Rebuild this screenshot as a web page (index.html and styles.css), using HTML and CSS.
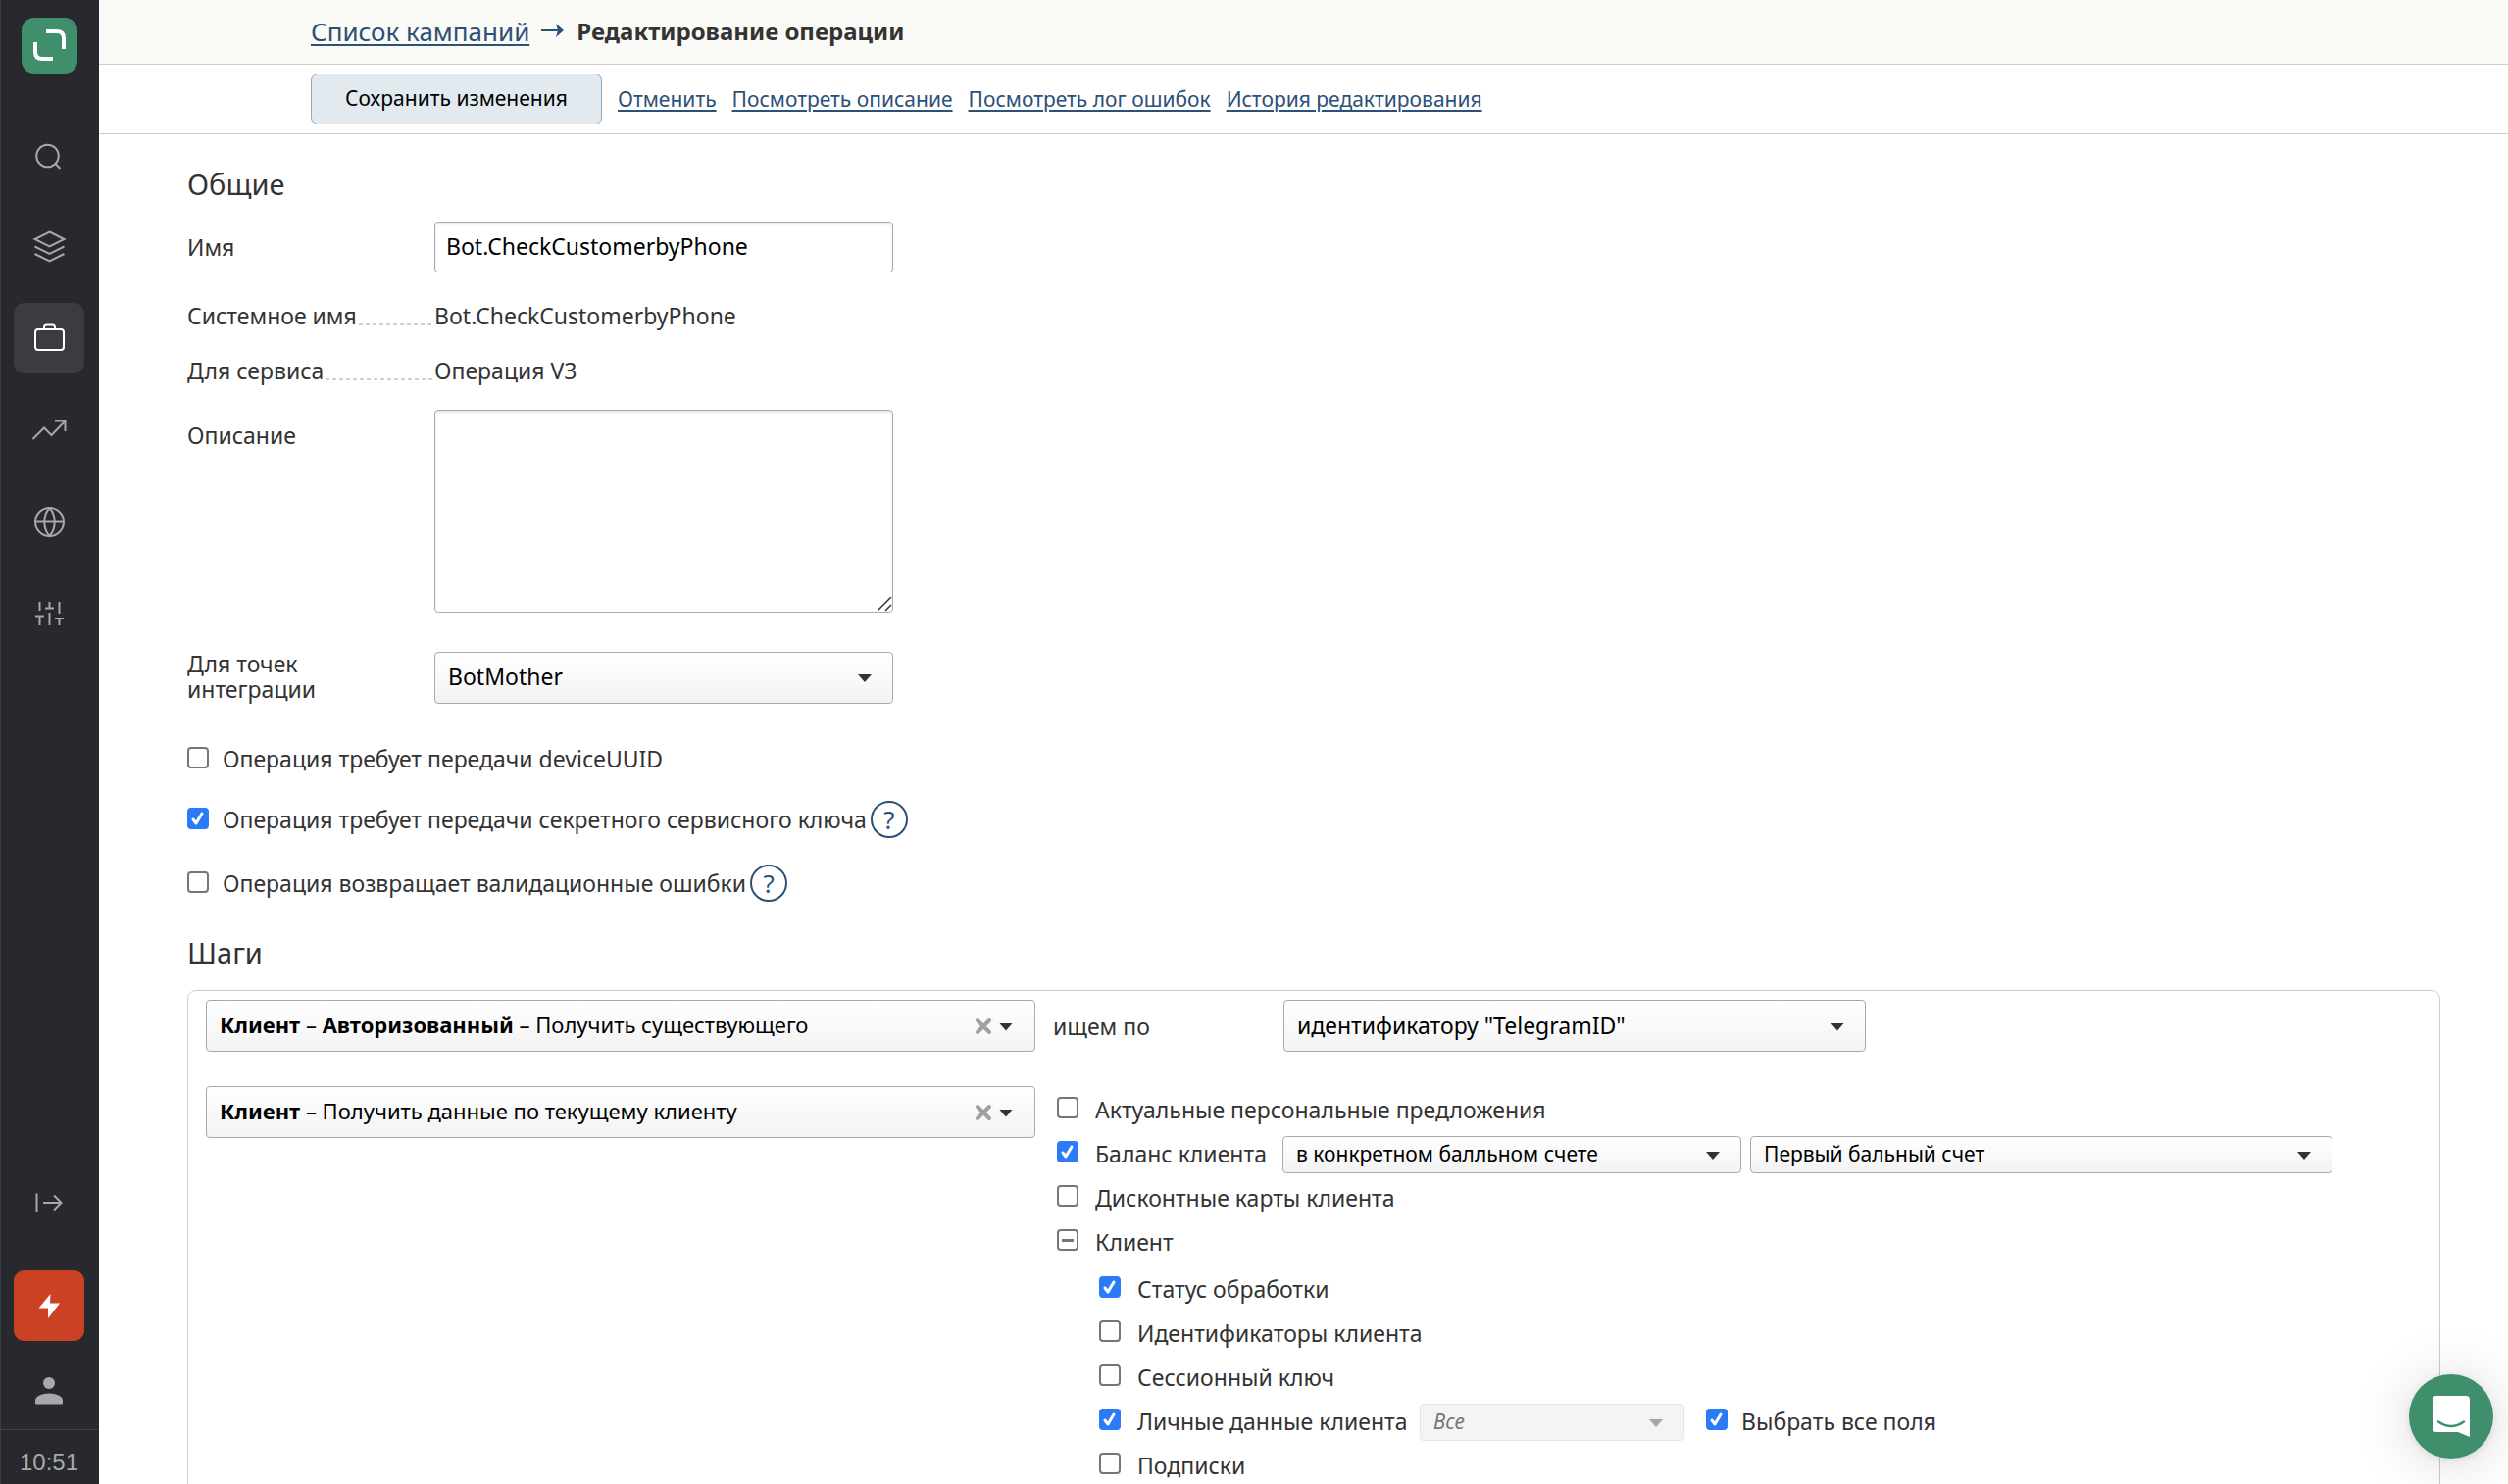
FILE: index.html
```html
<!DOCTYPE html>
<html lang="ru">
<head>
<meta charset="utf-8">
<meta name="viewport" content="width=device-width, initial-scale=1">
<title>Редактирование операции</title>
<link rel="stylesheet" href="styles.css">
</head>
<body>
<div class="app">
  <nav class="sidebar" aria-label="Основное меню">
    <a class="logo" href="#" aria-label="Главная">
      <svg viewBox="0 0 57 57" width="57" height="57" fill="none" stroke="#fff" stroke-width="4"><path d="M25 14h11q7 0 7 7v11M14 25v10q0 7 7 7h11"/></svg>
    </a>
    <a class="nav-item" href="#" aria-label="Поиск">
      <svg class="icon" viewBox="0 0 36 36"><circle cx="16.500" cy="17" r="11.300"/><path d="M24.500 25l5 5"/></svg>
    </a>
    <a class="nav-item" href="#" aria-label="Слои">
      <svg class="icon" viewBox="0 0 36 36"><path d="M18.500 2.500l15 7.500-15 7.500-15-7.500zM3.500 17.500l15 7.500 15-7.500M3.500 25l15 7.500 15-7.500"/></svg>
    </a>
    <a class="nav-item nav-item-active" href="#" aria-label="Кампании">
      <svg class="icon" viewBox="0 0 36 36"><rect x="4" y="9" width="29" height="21" rx="3"/><path d="M13 8.500V7q0-2.500 2.500-2.500h6q2.500 0 2.500 2.500v1.500"/></svg>
    </a>
    <a class="nav-item" href="#" aria-label="Отчеты">
      <svg class="icon" viewBox="0 0 36 36"><path d="M1.500 27L13 15.500l7.500 7.500L34 9M24 8.500h10.500V19"/></svg>
    </a>
    <a class="nav-item" href="#" aria-label="Сайты">
      <svg class="icon" viewBox="0 0 36 36"><circle cx="18.500" cy="17.500" r="14.500"/><path d="M4 17.500h29M18.500 3c-7 8-7 21 0 29c7-8 7-21 0-29"/></svg>
    </a>
    <a class="nav-item" href="#" aria-label="Настройки">
      <svg class="icon" viewBox="0 0 36 36"><path d="M8.500 5v9M4 19.500h9M8.500 19.500V29M18.500 5v6.500M14 11.500h9M18.500 16v13M28.500 5v12M24 22h9M28.500 22v7"/></svg>
    </a>
    <button class="nav-item nav-expand" type="button" aria-label="Развернуть меню">
      <svg class="icon" viewBox="0 0 36 36"><path d="M5.500 8.500v19M12 18h18.500M23 10.500l7.500 7.500-7.500 7.500"/></svg>
    </button>
    <a class="nav-item nav-item-alert" href="#" aria-label="Быстрые действия">
      <svg viewBox="0 0 36 36" width="36" height="36" fill="#fff"><path d="M19.500 6L7.500 20.500h9.500L17 31 29 15.500h-10z"/></svg>
    </a>
    <a class="nav-item nav-user" href="#" aria-label="Профиль">
      <svg viewBox="0 0 36 36" width="36" height="36" fill="#a7a8aa"><circle cx="18" cy="10" r="6"/><path d="M4 30v-2.500c0-4 7-7 14-7s14 3 14 7V30q0 1.500-1 1.500H5q-1 0-1-1.500z"/></svg>
    </a>
    <time class="clock">10:51</time>
  </nav>

  <main class="main">
    <header class="crumbs">
      <a href="#">Список кампаний</a>
      <svg class="crumb-arrow" viewBox="0 0 24 16" width="24" height="16" aria-hidden="true"><path d="M0 7h20" stroke="#2c5078" stroke-width="2"/><path d="M15 0l8 7-8 7 2-7z" fill="#2c5078"/></svg>
      <h1>Редактирование операции</h1>
    </header>
    <div class="toolbar">
      <button class="save" type="submit" form="operation">Сохранить изменения</button>
      <a href="#">Отменить</a>
      <a href="#">Посмотреть описание</a>
      <a href="#">Посмотреть лог ошибок</a>
      <a href="#">История редактирования</a>
    </div>

    <form class="content" id="operation">
      <h2>Общие</h2>
      <div class="field field-name">
        <label class="field-label" for="name">Имя</label>
        <input class="control" id="name" type="text" value="Bot.CheckCustomerbyPhone">
      </div>
      <dl class="facts">
        <div class="field"><dt class="field-label leader">Системное имя</dt><dd>Bot.CheckCustomerbyPhone</dd></div>
        <div class="field"><dt class="field-label leader">Для сервиса</dt><dd>Операция V3</dd></div>
      </dl>
      <div class="field field-top">
        <label class="field-label" for="description">Описание</label>
        <textarea class="control" id="description"></textarea>
      </div>
      <div class="field field-points">
        <label class="field-label" for="points">Для точек интеграции</label>
        <span class="select"><select id="points"><option>BotMother</option></select></span>
      </div>

      <div class="options">
        <div class="check"><input type="checkbox" id="uuid"><label for="uuid">Операция требует передачи deviceUUID</label></div>
        <div class="check"><input type="checkbox" id="secret" checked><label for="secret">Операция требует передачи секретного сервисного ключа</label><button class="help" type="button">?</button></div>
        <div class="check"><input type="checkbox" id="errors"><label for="errors">Операция возвращает валидационные ошибки</label><button class="help" type="button">?</button></div>
      </div>

      <h2>Шаги</h2>
      <section class="steps">
        <div class="step">
          <div class="combo">
            <button class="combo-value" type="button" aria-haspopup="listbox"><b>Клиент</b> – <b>Авторизованный</b> – Получить существующего</button>
            <button class="clear" type="button" aria-label="Очистить"><svg viewBox="0 0 18 18" width="18" height="18"><path d="M3 3l12 12M15 3L3 15" stroke="#a0a0a0" stroke-width="4" stroke-linecap="round"/></svg></button>
          </div>
          <div class="search-by">
            <label class="search-label" for="search-by">ищем по</label>
            <span class="select select-wide"><select id="search-by"><option>идентификатору "TelegramID"</option></select></span>
          </div>
        </div>
        <div class="step">
          <div class="combo">
            <button class="combo-value" type="button" aria-haspopup="listbox"><b>Клиент</b> – Получить данные по текущему клиенту</button>
            <button class="clear" type="button" aria-label="Очистить"><svg viewBox="0 0 18 18" width="18" height="18"><path d="M3 3l12 12M15 3L3 15" stroke="#a0a0a0" stroke-width="4" stroke-linecap="round"/></svg></button>
          </div>
          <ul class="tree">
            <li><div class="check"><input type="checkbox" id="offers"><label for="offers">Актуальные персональные предложения</label></div></li>
            <li><div class="check"><input type="checkbox" id="balance" checked><label class="balance-label" for="balance">Баланс клиента</label>
              <span class="select select-small"><select aria-label="Вид баланса"><option>в конкретном балльном счете</option></select></span>
              <span class="select select-small select-wide"><select aria-label="Счет"><option>Первый бальный счет</option></select></span></div></li>
            <li><div class="check"><input type="checkbox" id="cards"><label for="cards">Дисконтные карты клиента</label></div></li>
            <li><div class="check"><input type="checkbox" class="mixed" id="client" aria-checked="mixed"><label for="client">Клиент</label></div>
              <ul class="subtree">
                <li><div class="check"><input type="checkbox" id="status" checked><label for="status">Статус обработки</label></div></li>
                <li><div class="check"><input type="checkbox" id="ids"><label for="ids">Идентификаторы клиента</label></div></li>
                <li><div class="check"><input type="checkbox" id="session"><label for="session">Сессионный ключ</label></div></li>
                <li><div class="check"><input type="checkbox" id="personal" checked><label class="personal-label" for="personal">Личные данные клиента</label>
                  <span class="select select-small select-disabled"><select aria-label="Поля" disabled><option>Все</option></select></span>
                  <input type="checkbox" id="all-fields" checked><label for="all-fields">Выбрать все поля</label></div></li>
                <li><div class="check"><input type="checkbox" id="subs"><label for="subs">Подписки</label></div></li>
              </ul>
            </li>
          </ul>
        </div>
      </section>
    </form>
  </main>

  <button class="chat" type="button" aria-label="Открыть чат">
    <svg viewBox="0 0 40 44" width="40" height="44"><path d="M5 1h30q4 0 4 4v38l-12-5H5q-4 0-4-4V5q0-4 4-4z" fill="#fff"/><path d="M7 27.500q13 9 26 0" fill="none" stroke="#3f8f6c" stroke-width="2.500" stroke-linecap="round"/></svg>
  </button>
</div>
</body>
</html>
```
FILE: styles.css
```css
* { box-sizing: border-box; }

body {
  margin: 0;
  font: 23px/32px "Noto Sans", "Open Sans", sans-serif;
  color: #333;
  background: #fff;
}

button, input, select, textarea { font: inherit; color: #000; margin: 0; }
button { cursor: pointer; }
a { color: #2c5078; text-decoration-thickness: 2px; text-underline-offset: 3px; }
h1, h2, dl, dd, ul { margin: 0; padding: 0; }
ul { list-style: none; }

.app { display: flex; height: 100vh; overflow: hidden; }

/* Sidebar */
.sidebar {
  flex: none;
  width: 101px;
  display: flex;
  flex-direction: column;
  align-items: center;
  padding: 18px 1px 0 0;
  background: #28292e;
  box-shadow: inset 1px 0 #3d3e42;
}
.logo {
  display: block;
  height: 57px;
  margin-bottom: 49px;
  border-radius: 13px;
  background: #3f8f6c;
}
.nav-item {
  display: flex;
  align-items: center;
  justify-content: center;
  width: 72px;
  height: 72px;
  margin-bottom: 22px;
  padding: 0;
  border: 0;
  border-radius: 11px;
  background: none;
}
.nav-item:nth-child(2) { margin-bottom: 20px; }
.nav-item:nth-child(3) { margin-bottom: 21px; }
.icon { width: 36px; height: 36px; fill: none; stroke: #a7a8aa; stroke-width: 2; }
.nav-item-active { background: #3a3c41; }
.nav-item-active .icon { stroke: #fff; }
.nav-expand { margin-top: auto; margin-bottom: 33px; }
.nav-item-alert { background: #cb4123; margin-bottom: 15px; }
.nav-user { margin-bottom: 3px; }
.clock {
  align-self: stretch;
  height: 56px;
  padding-top: 17px;
  border-top: 1px solid #404145;
  font: 24px/32px "Liberation Sans", sans-serif;
  text-align: center;
  color: #a7a8aa;
}

/* Header */
.main { flex: 1; min-width: 0; overflow-y: auto; scrollbar-width: none; }
.crumbs {
  display: flex;
  align-items: center;
  gap: 12px;
  height: 66px;
  padding: 0 0 2px 216px;
  background: #fafaf6;
  border-bottom: 1px solid #ccc;
  font-size: 26px;
}
h1 { font-size: 24px; font-weight: 700; }
.toolbar {
  display: flex;
  align-items: center;
  gap: 16px;
  padding: 9px 0 9px 216px;
  border-bottom: 1px solid #ccc;
  font-size: 21px;
}
.save {
  width: 297px;
  height: 52px;
  padding: 0 0 3px;
  border: 1px solid #8ba8c4;
  border-radius: 7px;
  background: #e2e9ef;
}

/* Form */
.content { padding: 31px 69px 0 90px; }
h2 { font-size: 29px; font-weight: 400; line-height: 40px; margin-bottom: 18px; }
.field { display: grid; grid-template-columns: 252px minmax(0, 468px); align-items: center; }
.field-top { align-items: start; margin-bottom: 40px; }
.field-top .field-label { line-height: 52px; }
.field-points .field-label { line-height: 26px; padding: 0 90px 2px 0; }
.facts { display: grid; gap: 24px; margin: 28px 0 24px; }
.leader { display: flex; }
.leader::after {
  content: "";
  flex: 1;
  height: 26px;
  margin-left: 2px;
  background: repeating-linear-gradient(90deg, #d0d0d0 0 4px, transparent 4px 7px) bottom / 100% 2px no-repeat;
}
.control {
  display: block;
  width: 100%;
  height: 52px;
  padding: 0 11px 2px;
  border: 1px solid #aaa;
  border-radius: 4px;
  background: #fff;
  box-shadow: inset 0 2px 2px #e8e8e8;
}
textarea.control { height: 207px; margin-bottom: -1px; }
textarea::-webkit-resizer {
  background: url('data:image/svg+xml,<svg xmlns="http://www.w3.org/2000/svg" viewBox="0 0 15 15" stroke="%23333" stroke-width="1.500"><path d="M0 14L14 0M8 14l6-6"/></svg>') center / 15px no-repeat;
}

/* Drop-downs */
.select { position: relative; display: block; flex: 0 1 468px; }
.select-wide { flex-basis: 594px; }
.select select, .combo {
  width: 100%;
  height: 53px;
  border: 1px solid #aaa;
  border-radius: 4px;
  background: linear-gradient(#fff, #f3f3f3);
}
.select select { display: block; appearance: none; padding: 0 50px 2px 13px; opacity: 1; }
.select::after, .combo::after {
  content: "";
  position: absolute;
  right: 22px;
  top: calc(50% - 3px);
  width: 14px;
  height: 8px;
  background: #333;
  clip-path: polygon(0 0, 100% 0, 50% 100%);
  pointer-events: none;
}
.select-small { margin-top: 3px; }
.select-small select { height: 38px; font-size: 21px; }
.select-disabled { flex-basis: 270px; }
.select-disabled select { border-color: #e6e6e6; background: #f4f4f4; color: #777; font-style: italic; }
.select-disabled::after { background: #a5a5a5; }

/* Check boxes */
.check { display: flex; align-items: center; }
.check label { margin-left: 14px; flex: none; white-space: nowrap; }
input[type="checkbox"] {
  appearance: none;
  flex: none;
  width: 22px;
  height: 22px;
  margin-bottom: 3px;
  border: 2px solid #767676;
  border-radius: 4px;
  background: #fff;
}
input[type="checkbox"]:checked {
  border-color: #2b7af8;
  background: #2b7af8 url('data:image/svg+xml,<svg xmlns="http://www.w3.org/2000/svg" viewBox="0 0 18 18" fill="none" stroke="white" stroke-width="3" stroke-linecap="round" stroke-linejoin="round"><path d="M4 10l3 4 6-10"/></svg>') center / 18px;
}
.mixed { background: linear-gradient(#767676, #767676) center / 12px 3px no-repeat #fff !important; }
.options { display: grid; gap: 27px; margin: 40px 0 32px; }
.help {
  width: 38px;
  height: 38px;
  margin-left: 4px;
  padding: 0;
  border: 2px solid #2c5078;
  border-radius: 50%;
  background: none;
  color: #2c5078;
  font-size: 26px;
  line-height: 32px;
}

/* Steps */
.steps {
  display: grid;
  gap: 35px;
  padding: 9px 18px 40px;
  border: 1px solid #ccc;
  border-radius: 9px;
}
.step { display: flex; align-items: flex-start; gap: 18px; }
.combo { position: relative; flex: 0 1 846px; display: flex; align-items: center; padding-right: 43px; }
.combo-value {
  flex: 1;
  height: 100%;
  padding: 0 0 3px 13px;
  border: 0;
  background: none;
  font-size: 22px;
  text-align: left;
  white-space: nowrap;
}
.clear { display: flex; padding: 0; border: 0; background: none; }
.search-by { flex: 1; display: flex; align-items: center; }
.search-label { width: 235px; }
.tree { flex: 1; padding: 1px 0 0 4px; }
.tree .check { height: 45px; }
.tree label { margin-left: 17px; }
.tree .balance-label { width: 174px; margin-right: 17px; }
.tree .select + .select { margin-left: 9px; }
.subtree { padding: 3px 0 0 43px; }
.tree .subtree label { margin-left: 17px; }
.subtree .personal-label { width: 270px; margin-right: 18px; }
.subtree .select + input { margin-left: 22px; }
.tree .subtree .select ~ label:last-child { margin-left: 14px; }

/* Chat launcher */
.chat {
  position: fixed;
  right: 15px;
  bottom: 26px;
  display: flex;
  align-items: center;
  justify-content: center;
  width: 86px;
  height: 86px;
  padding: 0;
  border: 0;
  border-radius: 50%;
  background: #3f8f6c;
  box-shadow: 0 2px 10px rgba(0, 0, 0, .1), 0 4px 60px rgba(0, 0, 0, .16);
}
```
